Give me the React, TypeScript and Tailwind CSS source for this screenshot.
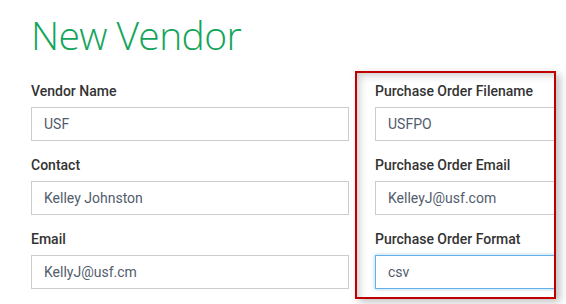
const Field = ({
  label,
  value,
  focused = false,
}: {
  label: string;
  value: string;
  focused?: boolean;
}) => {
  return (
    <div className="flex flex-col gap-[6px]">
      <label className="h-[20px] text-[14px] leading-[20px] font-medium text-[#333] whitespace-nowrap">
        {label}
      </label>
      <div
        className={
          focused
            ? "flex items-center h-[34px] px-[12px] border border-[#66afe9] shadow-[0_0_4px_rgba(102,175,233,0.6)] bg-white text-[14px] text-[#525c6c] whitespace-nowrap"
            : "flex items-center h-[34px] px-[12px] border border-[#ccc] bg-white text-[14px] text-[#525c6c] whitespace-nowrap"
        }
      >
        {value}
      </div>
    </div>
  );
};

export default function App() {
  return (
    <div
      className="w-[566px] h-[304px] overflow-hidden bg-white pl-[31px]"
      style={{ fontFamily: "Roboto, 'Liberation Sans', sans-serif" }}
    >
      <h1 className="pt-[11px] h-[58px] text-[39px] leading-[47px] tracking-[-0.6px] font-light text-[#12a55a] font-['Open_Sans',sans-serif]">
        New Vendor
      </h1>
      <div className="flex items-start mt-[13px]">
        <div className="w-[318px] mt-[10px] flex flex-col gap-[14px]">
          <Field label="Vendor Name" value="USF" />
          <Field label="Contact" value="Kelley Johnston" />
          <Field label="Email" value="KellyJ@usf.cm" />
        </div>
        <div className="ml-[6px] w-[201px] h-[228px] border-2 border-[#c00000] overflow-hidden shadow-[4px_3px_8px_rgba(0,0,0,0.25)]">
          <div className="h-full pl-[18px] pt-[8px] shadow-[inset_6px_6px_8px_-4px_rgba(0,0,0,0.22)]">
            <div className="w-[240px] flex flex-col gap-[14px]">
              <Field label="Purchase Order Filename" value="USFPO" />
              <Field label="Purchase Order Email" value="KelleyJ@usf.com" />
              <Field label="Purchase Order Format" value="csv" focused />
            </div>
          </div>
        </div>
      </div>
    </div>
  );
}
